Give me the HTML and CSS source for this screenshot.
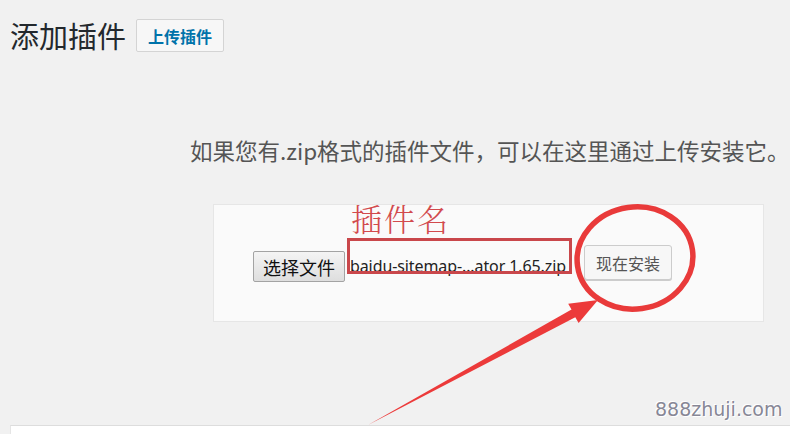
FILE: index.html
```html
<!DOCTYPE html>
<html lang="zh-CN">
<head>
  <meta charset="UTF-8" />
  <title>添加插件</title>
  <link rel="stylesheet" href="styles.css">
</head>
<body>
  <div class="wrap">
    <div class="title-row">
      <h1>添加插件</h1>
      <button class="upload-btn">上传插件</button>
    </div>

    <p class="install-help">如果您有.zip格式的插件文件，可以在这里通过上传安装它。</p>

    <div class="upload-box">
      <div class="upload-row">
        <button class="file-btn">选择文件</button>
        <span class="file-name">baidu-sitemap-...ator 1.65.zip</span>
        <button class="install-btn">现在安装</button>
      </div>
    </div>

    <div class="lower-panel"></div>
  </div>

  <!-- annotations drawn over the screenshot -->
  <span class="note-label">插件名</span>
  <svg class="notes" width="790" height="434" viewBox="0 0 790 434">
    <rect x="348.5" y="239.5" width="222" height="33" fill="none" stroke="#c9474b" stroke-width="3" />
    <ellipse cx="635" cy="258" rx="58" ry="51" fill="none" stroke="#e93a3a" stroke-width="5.5" transform="rotate(-8 635 258)" />
    <polygon points="368,425 571.5,309.5 568.2,303.7 598,300 578.6,323.1 575.3,317.2" fill="#ec3a3a" />
  </svg>
  <span class="watermark">888zhuji.com</span>
</body>
</html>
```

FILE: styles.css
```css
body {
  font-family: "Noto Sans", "Noto Sans CJK SC", sans-serif;
  background-color: #f1f1f1;
  color: #23282d;
  margin: 0;
  height: 434px;
  overflow: hidden;
  position: relative;
}

.wrap {
  padding: 19px 0 0 10px;
}

.title-row {
  display: flex;
  align-items: center;
  gap: 10px;
}

h1 {
  margin: 0;
  font-family: "Noto Sans CJK SC", sans-serif;
  font-size: 29px;
  font-weight: 400;
  line-height: 33px;
  color: #23282d;
}

.upload-btn {
  height: 33px;
  padding: 0 11px;
  font-family: "Noto Sans CJK SC", sans-serif;
  font-size: 16px;
  font-weight: 700;
  color: #0073aa;
  background-color: #f7f7f7;
  border: 1px solid #d4d4d4;
  border-radius: 2px;
}

.install-help {
  margin: 82px 0 0 180px;
  font-family: "Noto Sans CJK SC", sans-serif;
  font-size: 22.5px;
  line-height: 32px;
  color: #555;
  white-space: nowrap;
}

.upload-box {
  margin: 38px 0 0 203px;
  width: 549px;
  height: 116px;
  background-color: #fafafa;
  border: 1px solid #e6e6e6;
}

.upload-row {
  display: flex;
  align-items: center;
  padding: 38px 0 0 39px;
}

.file-btn {
  height: 31px;
  padding: 0 9px;
  font-family: "Noto Sans CJK SC", sans-serif;
  font-size: 18px;
  color: #111;
  background: linear-gradient(#f4f4f4, #dedede);
  border: 1px solid #a3a3a3;
  border-radius: 2px;
  margin-top: 8px;
}

.file-name {
  width: 223px;
  margin-left: 5px;
  margin-top: 6px;
  white-space: nowrap;
  font-size: 16px;
  letter-spacing: -0.1px;
  color: #222;
}

.install-btn {
  height: 35px;
  margin-left: 11px;
  padding: 0 11px;
  font-family: "Noto Sans CJK SC", sans-serif;
  font-size: 16px;
  color: #555;
  background-color: #f7f7f7;
  border: 1px solid #cccccc;
  border-radius: 3px;
  box-shadow: 0 1px 0 #cccccc;
}

.lower-panel {
  margin-top: 103px;
  height: 8px;
  background-color: #fff;
  border-top: 1px solid #dddddd;
  border-left: 1px solid #e5e5e5;
}

.notes {
  position: absolute;
  top: 0;
  left: 0;
  pointer-events: none;
}

.note-label {
  position: absolute;
  left: 351px;
  top: 195px;
  font-family: "Noto Serif CJK SC", "Noto Sans CJK SC", serif;
  font-size: 31px;
  font-weight: 300;
  color: #d24a4d;
  letter-spacing: 2px;
}

.watermark {
  position: absolute;
  left: 655px;
  top: 398px;
  font-family: "DejaVu Sans", sans-serif;
  font-size: 19px;
  color: #878796;
  text-shadow: 1px 1px 0 #fff, -1px -1px 0 #fff;
}
```
